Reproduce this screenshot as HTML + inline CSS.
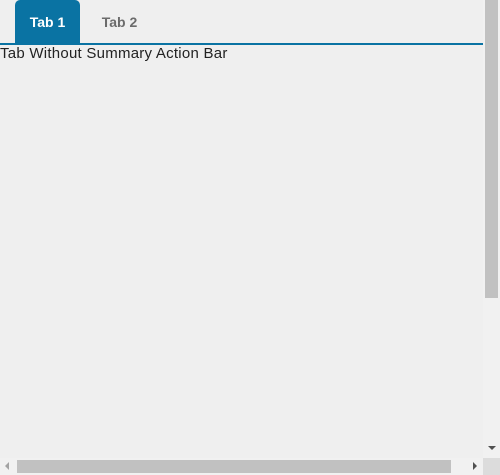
<!DOCTYPE html>
<html><head><style>
html,body{margin:0;padding:0;width:500px;height:475px;overflow:hidden;background:#efefef;font-family:"Liberation Sans",sans-serif;position:relative}
.tab1{position:absolute;left:15px;top:0;width:65px;height:43px;background:#0a73a3;border-radius:5px 5px 0 0;color:#fff;font-weight:bold;font-size:14px;line-height:44px;text-align:center}
.tab2{position:absolute;left:87px;top:0;width:65px;height:43px;color:#6b6b6b;font-weight:bold;font-size:14px;line-height:44px;text-align:center}
.line{position:absolute;left:0;top:43px;width:483px;height:2px;background:#0a73a3}
.txt{position:absolute;left:0;top:45px;font-size:15px;letter-spacing:0.25px;color:#222;white-space:nowrap}
.vs{position:absolute;left:483px;top:0;width:17px;height:458px;background:#f1f1f1}
.vt{position:absolute;left:485px;top:0;width:13px;height:298px;background:#c1c1c1}
.hs{position:absolute;left:0;top:458px;width:483px;height:17px;background:#f1f1f1}
.ht{position:absolute;left:17px;top:460px;width:434px;height:13px;background:#c1c1c1}
.corner{position:absolute;left:483px;top:458px;width:17px;height:17px;background:#dcdcdc}
</style></head><body>
<div class="tab1">Tab 1</div>
<div class="tab2">Tab 2</div>
<div class="line"></div>
<div class="txt">Tab Without Summary Action Bar</div>
<div class="vs"></div><div class="vt"></div>
<div class="hs"></div><div class="ht"></div>
<div class="corner"></div>
<svg style="position:absolute;left:0;top:0" width="500" height="475">
<polygon points="488,446 496,446 492,450" fill="#505050"/>
<polygon points="9,462 9,470 5,466" fill="#a3a3a3"/>
<polygon points="473,462 473,470 477,466" fill="#505050"/>
</svg>
</body></html>
